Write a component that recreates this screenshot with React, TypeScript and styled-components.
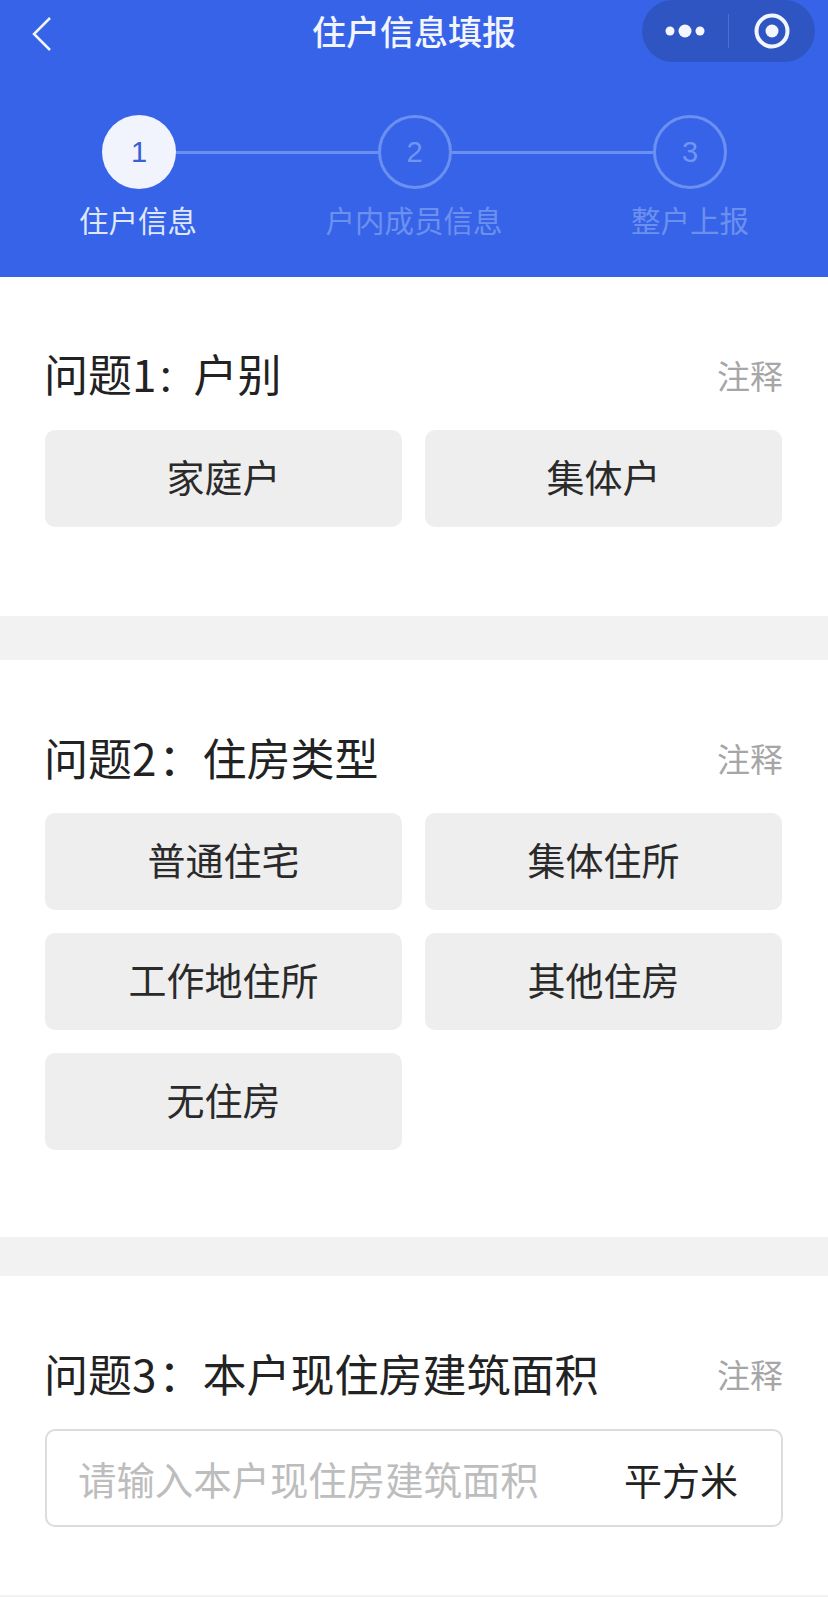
import React from 'react';
import styled, { createGlobalStyle } from 'styled-components';

const GlobalStyle = createGlobalStyle`
    html, body {
        margin: 0;
        padding: 0;
        background: #ffffff;
    }
    body {
        font-family: "Noto Sans CJK SC", "Liberation Sans", sans-serif;
    }
`;

const Page = styled.div`
    width: 828px;
    height: 1597px;
    overflow: hidden;
    background: #ffffff;
    display: flex;
    flex-direction: column;
`;

const Header = styled.header`
    height: 277px;
    flex-shrink: 0;
    background: #3763e8;
    box-sizing: border-box;
`;

const NavBar = styled.div`
    display: grid;
    grid-template-columns: 1fr auto 1fr;
    align-items: center;
    height: 62px;
`;

const BackButton = styled.div`
    display: flex;
    align-items: center;
    padding: 6px 0 0 31px;
`;

const NavTitle = styled.div`
    font-size: 34px;
    line-height: 62px;
    font-weight: 500;
    color: #f2f5fe;
    white-space: nowrap;
`;

const Capsule = styled.div`
    justify-self: end;
    margin-right: 13px;
    width: 173px;
    height: 62px;
    border-radius: 31px;
    background: #2f55c2;
    display: flex;
    align-items: center;
`;

const CapsuleCell = styled.div`
    flex: 1;
    display: flex;
    align-items: center;
    justify-content: center;
`;

const CapsuleDivider = styled.div`
    width: 1px;
    height: 34px;
    background: #4a6fd2;
`;

const StepTrack = styled.div`
    display: flex;
    align-items: center;
    padding: 0 101px 0 102px;
    margin-top: 53px;
`;

const StepCircle = styled.div<{ $active?: boolean }>`
    width: 74px;
    height: 74px;
    flex-shrink: 0;
    box-sizing: border-box;
    border-radius: 50%;
    display: flex;
    align-items: center;
    justify-content: center;
    font-family: "Liberation Sans", sans-serif;
    font-size: 29px;
    background: ${({ $active }) => ($active ? '#f1f4fd' : 'transparent')};
    border: ${({ $active }) => ($active ? 'none' : '3px solid #6a90f2')};
    color: ${({ $active }) => ($active ? '#3a5fd3' : '#7096f2')};
`;

const StepLine = styled.div`
    flex: 1;
    height: 3px;
    background: #6a90f2;
`;

const StepLabels = styled.div`
    display: grid;
    grid-template-columns: repeat(3, 276px);
    margin: 10px 0 0 0;
`;

const StepLabel = styled.div<{ $active?: boolean }>`
    text-align: center;
    font-size: 29.5px;
    line-height: 40px;
    white-space: nowrap;
    color: ${({ $active }) => ($active ? '#dfe7fb' : '#6c90ee')};
`;

const Section = styled.section<{ $top: number; $bottom: number }>`
    padding: ${({ $top }) => $top}px 45px ${({ $bottom }) => $bottom}px;
`;

const Band = styled.div<{ $height: number }>`
    height: ${({ $height }) => $height}px;
    background: #f2f2f2;
`;

const QuestionRow = styled.div`
    display: flex;
    align-items: center;
    justify-content: space-between;
    height: 60px;
    margin-bottom: 23px;
`;

const QuestionTitle = styled.h2`
    margin: 0 0 0 -1px;
    padding-bottom: 6px;
    font-size: 44px;
    line-height: 54px;
    font-weight: 400;
    color: #222222;
    white-space: nowrap;
`;

const QuestionNumber = styled.span<{ $spacing: number }>`
    margin-right: ${({ $spacing }) => $spacing}px;
`;

// "1" is narrower in the reference, so its colon takes up less room
const QuestionColon = styled.span<{ $size: number }>`
    font-size: ${({ $size }) => $size}px;
`;

const NoteLink = styled.span`
    padding-bottom: 4px;
    font-size: 33px;
    line-height: 44px;
    color: #a6a6a6;
    white-space: nowrap;
`;

const OptionGrid = styled.div`
    display: grid;
    grid-template-columns: 357px 357px;
    column-gap: 23px;
    row-gap: 23px;
`;

const OptionButton = styled.div`
    height: 97px;
    box-sizing: border-box;
    padding-bottom: 6px;
    border-radius: 10px;
    background: #eeeeee;
    display: flex;
    align-items: center;
    justify-content: center;
    font-size: 38px;
    color: #2a2a2a;
`;

const InputBox = styled.div`
    height: 98px;
    box-sizing: border-box;
    border: 2px solid #dcdcdc;
    border-radius: 10px;
    display: flex;
    align-items: center;
    justify-content: space-between;
    padding: 0 43px 0 31px;
`;

const Placeholder = styled.span`
    font-size: 38.4px;
    color: #bdbdbd;
    white-space: nowrap;
`;

const Unit = styled.span`
    font-size: 38px;
    color: #222222;
    white-space: nowrap;
`;

const Dot = ({ cx, r }: { cx: number; r: number }) => <circle cx={cx} cy="13" r={r} fill="#f4f6fe" />;

const questionOne = ['家庭户', '集体户'];
const questionTwo = ['普通住宅', '集体住所', '工作地住所', '其他住房', '无住房'];
const steps = ['住户信息', '户内成员信息', '整户上报'];

export default function App() {
    return (
        <Page>
            <GlobalStyle />
            <Header>
                <NavBar>
                    <BackButton>
                        <svg width="22" height="36" viewBox="0 0 22 36" fill="none">
                            <path d="M19 2 L3 18 L19 34" stroke="#f2f5fe" strokeWidth="2.5" />
                        </svg>
                    </BackButton>
                    <NavTitle>住户信息填报</NavTitle>
                    <Capsule>
                        <CapsuleCell>
                            <svg width="42" height="26" viewBox="0 0 42 26">
                                <Dot cx={6} r={4.5} />
                                <Dot cx={21} r={6.5} />
                                <Dot cx={36} r={4.5} />
                            </svg>
                        </CapsuleCell>
                        <CapsuleDivider />
                        <CapsuleCell>
                            <svg width="36" height="36" viewBox="0 0 36 36" fill="none">
                                <circle cx="18" cy="18" r="15.5" stroke="#f4f6fe" strokeWidth="4" />
                                <circle cx="18" cy="18" r="6.5" fill="#f4f6fe" />
                            </svg>
                        </CapsuleCell>
                    </Capsule>
                </NavBar>
                <StepTrack>
                    <StepCircle $active>1</StepCircle>
                    <StepLine />
                    <StepCircle>2</StepCircle>
                    <StepLine />
                    <StepCircle>3</StepCircle>
                </StepTrack>
                <StepLabels>
                    {steps.map((step, i) => (
                        <StepLabel key={step} $active={i === 0}>
                            {step}
                        </StepLabel>
                    ))}
                </StepLabels>
            </Header>

            <Section $top={70} $bottom={89}>
                <QuestionRow>
                    <QuestionTitle>
                        问题<QuestionNumber $spacing={0}>1</QuestionNumber>
                        <QuestionColon $size={37}>：</QuestionColon>户别
                    </QuestionTitle>
                    <NoteLink>注释</NoteLink>
                </QuestionRow>
                <OptionGrid>
                    {questionOne.map((label) => (
                        <OptionButton key={label}>{label}</OptionButton>
                    ))}
                </OptionGrid>
            </Section>
            <Band $height={44} />

            <Section $top={70} $bottom={87}>
                <QuestionRow>
                    <QuestionTitle>
                        问题<QuestionNumber $spacing={2}>2</QuestionNumber>
                        <QuestionColon $size={44}>：</QuestionColon>住房类型
                    </QuestionTitle>
                    <NoteLink>注释</NoteLink>
                </QuestionRow>
                <OptionGrid>
                    {questionTwo.map((label) => (
                        <OptionButton key={label}>{label}</OptionButton>
                    ))}
                </OptionGrid>
            </Section>
            <Band $height={39} />

            <Section $top={70} $bottom={68}>
                <QuestionRow>
                    <QuestionTitle>
                        问题<QuestionNumber $spacing={2}>3</QuestionNumber>
                        <QuestionColon $size={44}>：</QuestionColon>本户现住房建筑面积
                    </QuestionTitle>
                    <NoteLink>注释</NoteLink>
                </QuestionRow>
                <InputBox>
                    <Placeholder>请输入本户现住房建筑面积</Placeholder>
                    <Unit>平方米</Unit>
                </InputBox>
            </Section>
            <Band $height={2} />
        </Page>
    );
}
